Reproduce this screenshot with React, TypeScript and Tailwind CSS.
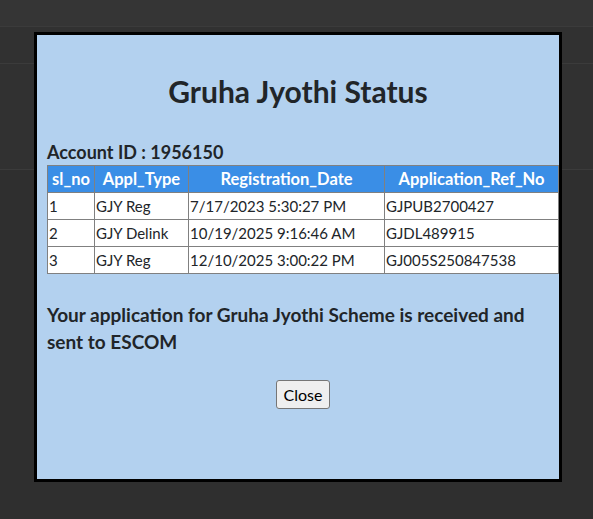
import React from 'react';

const rows = [
  { sl: '1', type: 'GJY Reg', date: '7/17/2023 5:30:27 PM', ref: 'GJPUB2700427' },
  { sl: '2', type: 'GJY Delink', date: '10/19/2025 9:16:46 AM', ref: 'GJDL489915' },
  { sl: '3', type: 'GJY Reg', date: '12/10/2025 3:00:22 PM', ref: 'GJ005S250847538' },
];

export default function App() {
  return (
    <div className="relative h-[519px] w-full overflow-hidden bg-[#2f2f2f] font-['Lato','Open_Sans',sans-serif] text-[#212529]">
      {/* dimmed page behind */}
      <div className="h-[26px] bg-[#353535]" />
      <div className="h-[38px] border-y border-[#3b3b3b] bg-[#313131]" />
      <div className="h-[106px] border-b border-[#3b3b3b] bg-[#313131]" />

      {/* Modal */}
      <div className="absolute left-[34px] top-[32px] h-[450px] w-[528px] border-[3px] border-black bg-[#b3d1ef]">
        <h2 className="pt-[36px] text-center text-[30px] font-bold leading-[40px]">Gruha Jyothi Status</h2>

        <div className="mt-[28px] pl-[10px]">
          <p className="text-[18px] font-bold leading-[26px]">Account ID : 1956150</p>
          <table className="w-[511px] table-fixed border-collapse text-[15px]">
            <colgroup>
              <col className="w-[47px]" />
              <col className="w-[94px]" />
              <col className="w-[196px]" />
              <col className="w-[174px]" />
            </colgroup>
            <thead>
              <tr className="h-[27px] bg-[#3a8ee6] text-[16.5px] text-white">
                <th className="border border-[#808080] px-[2px] font-bold">sl_no</th>
                <th className="border border-[#808080] px-[2px] font-bold">Appl_Type</th>
                <th className="border border-[#808080] px-[2px] font-bold">Registration_Date</th>
                <th className="border border-[#808080] px-[2px] font-bold">Application_Ref_No</th>
              </tr>
            </thead>
            <tbody>
              {rows.map((r) => (
                <tr key={r.sl} className="h-[27px] bg-white">
                  <td className="border border-[#808080] px-[1px]">{r.sl}</td>
                  <td className="border border-[#808080] px-[1px]">{r.type}</td>
                  <td className="border border-[#808080] px-[1px]">{r.date}</td>
                  <td className="border border-[#808080] px-[1px]">{r.ref}</td>
                </tr>
              ))}
            </tbody>
          </table>

          <p className="mt-[27px] w-[500px] text-[19px] font-bold leading-[27px]">
            Your application for Gruha Jyothi Scheme is received and sent to ESCOM
          </p>
        </div>

        <div className="mt-[25px] flex justify-center pl-[10px]">
          <button className="h-[29px] rounded-[3px] border border-[#767676] bg-[#efefef] px-[7px] text-[16px] text-black">
            Close
          </button>
        </div>
      </div>
    </div>
  );
}
